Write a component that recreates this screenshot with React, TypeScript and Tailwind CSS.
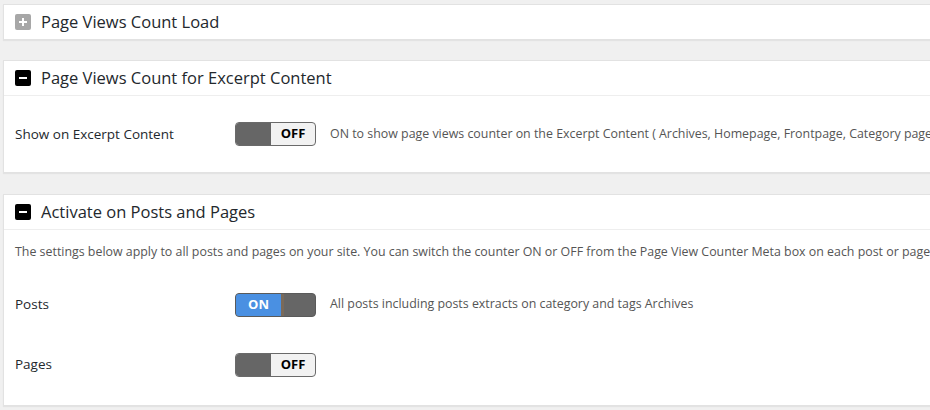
import React from "react";

const font = { fontFamily: '"Open Sans", "Noto Sans", sans-serif' };

const PlusIcon = () => (
  <span className="flex h-4 w-4 items-center justify-center rounded-[2px] bg-[#a7a7a7]">
    <svg width="10" height="10" viewBox="0 0 10 10">
      <path d="M5 1v8M1 5h8" stroke="#fff" strokeWidth="2" />
    </svg>
  </span>
);

const MinusIcon = () => (
  <span className="flex h-4 w-4 items-center justify-center rounded-[2px] bg-black">
    <svg width="10" height="10" viewBox="0 0 10 10">
      <path d="M1 5h8" stroke="#fff" strokeWidth="2" />
    </svg>
  </span>
);

const Toggle = ({ on }: { on: boolean }) =>
  on ? (
    <div className="flex h-6 w-[81px] shrink-0 overflow-hidden rounded-[4px] border border-[#5a5a5a] bg-[#666]">
      <div className="flex w-[45px] items-center justify-center bg-[#4a90e2] text-[13px] font-bold text-white">
        ON
      </div>
      <div className="w-[3px] bg-[#7a6a5a]" />
    </div>
  ) : (
    <div className="flex h-6 w-[81px] shrink-0 overflow-hidden rounded-[4px] border border-[#6a6a6a] bg-[#f2f2f2]">
      <div className="w-[35px] bg-[#666]" />
      <div className="flex flex-1 items-center justify-center text-[13px] font-bold text-black">
        OFF
      </div>
    </div>
  );

const Header = ({ title, open, h = "h-[35px]" }: { title: string; open: boolean; h?: string }) => (
  <div className={`flex items-center gap-[10px] px-[11px] ${h} ${open ? "border-b border-[#eeeeee]" : ""}`}>
    {open ? <MinusIcon /> : <PlusIcon />}
    <span className="text-[16.5px] font-medium text-[#23282d]">{title}</span>
  </div>
);

const Row = ({ label, on, desc, h }: { label: string; on: boolean; desc?: string; h: string }) => (
  <div className={`flex items-center px-[11px] ${h}`}>
    <div className="w-[220px] shrink-0 text-[13.5px] font-medium text-[#23282d]">{label}</div>
    <Toggle on={on} />
    {desc && <div className="ml-[14px] whitespace-nowrap text-[12.4px] text-[#555]">{desc}</div>}
  </div>
);

export default function App() {
  return (
    <div className="h-[410px] w-[930px] overflow-hidden bg-[#f0f0f0] pl-[3px] pt-[4px]" style={font}>
      <div className="w-[960px] border border-[#e2e2e2] bg-white shadow-[0_1px_1px_rgba(0,0,0,0.05)]">
        <Header title="Page Views Count Load" open={false} h="h-[34px]" />
      </div>

      <div className="mt-[20px] w-[960px] border border-[#e2e2e2] bg-white shadow-[0_1px_1px_rgba(0,0,0,0.05)]">
        <Header title="Page Views Count for Excerpt Content" open />
        <Row
          label="Show on Excerpt Content"
          on={false}
          h="h-[76px]"
          desc="ON to show page views counter on the Excerpt Content ( Archives, Homepage, Frontpage, Category pages )"
        />
      </div>

      <div className="mt-[21px] w-[960px] border border-[#e2e2e2] bg-white shadow-[0_1px_1px_rgba(0,0,0,0.05)]">
        <Header title="Activate on Posts and Pages" open />
        <div className="whitespace-nowrap px-[11px] pt-[13px] text-[12.4px] text-[#555]">
          The settings below apply to all posts and pages on your site. You can switch the counter ON or OFF from the Page View Counter Meta box on each post or page
        </div>
        <Row
          label="Posts"
          on
          h="h-[60px] mt-[13px]"
          desc="All posts including posts extracts on category and tags Archives"
        />
        <Row label="Pages" on={false} h="h-[60px] mb-[10px]" />
      </div>
    </div>
  );
}
